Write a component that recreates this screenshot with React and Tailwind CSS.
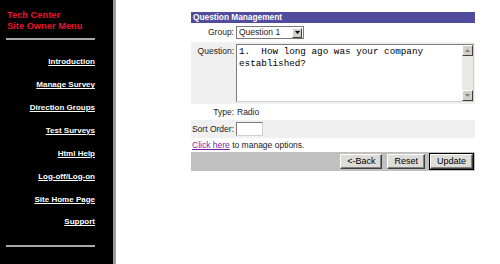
const links = [
  'Introduction',
  'Manage Survey',
  'Direction Groups',
  'Test Surveys',
  'Html Help',
  'Log-off/Log-on',
  'Site Home Page',
  'Support',
];

const Sidebar = () => (
  <div className="w-[116px] h-[264px] shrink-0 bg-black border-r-[3px] border-[#9c9c9c] pl-[6px] pt-[10px]">
    <div className="pl-[1px] text-[9.3px] leading-[11px] font-bold text-[#e8112d]">
      <div>Tech Center</div>
      <div>Site Owner Menu</div>
    </div>
    <div className="mt-[6px] w-[89px] h-[2px] bg-[#a8a8a8]" />
    <div className="mt-[11px] w-[89px] flex flex-col items-end">
      {links.map((l) => (
        <div key={l} className="h-[22.86px] flex items-center">
          <a href="#" className="text-[8px] font-bold text-white underline">
            {l}
          </a>
        </div>
      ))}
    </div>
    <div className="mt-[11px] w-[89px] h-[2px] bg-[#a8a8a8]" />
  </div>
);

const Btn = ({ children, def }) => (
  <div className={def ? 'border border-black' : 'border border-transparent'}>
    <div className="h-[15px] px-[6px] flex items-center bg-[#dedcd6] border-t border-l border-white border-r border-b border-r-[#404040] border-b-[#404040] text-[9px] text-black shadow-[inset_-1px_-1px_0_#808080]">
      {children}
    </div>
  </div>
);

const ArrowBtn = ({ up, color = '#808080', size = 11 }) => (
  <div
    className={
      (size === 11 ? 'h-[11px] w-[11px]' : 'h-[10px] w-[10px]') +
      ' shrink-0 bg-[#d4d0c8] border-t border-l border-white border-r border-b border-r-[#404040] border-b-[#404040] flex items-center justify-center'
    }
  >
    <svg width="5" height="3" viewBox="0 0 5 3">
      <path d={up ? 'M2.5 0 L5 3 L0 3 Z' : 'M0 0 L5 0 L2.5 3 Z'} fill={color} />
    </svg>
  </div>
);

export default function App() {
  return (
    <div className="flex w-[500px] h-[264px] bg-white overflow-hidden" style={{ fontFamily: '"Liberation Sans", Arial, sans-serif' }}>
      <Sidebar />
      <div className="flex-1 pl-[75px] pt-[12px]">
        <div className="w-[284px] text-[8.5px] text-[#222]">
          <div className="h-[11px] bg-[#514c9b] text-white font-bold text-[8.3px] leading-[11px] pl-[2px]">
            Question Management
          </div>

          <div className="h-[19px] flex items-center">
            <div className="w-[44px] text-right pr-[1px]">Group:</div>
            <div className="ml-[1px] h-[13px] w-[68px] border border-[#7a7a7a] bg-white flex items-center justify-between pl-[2px] pr-[1px]">
              <span className="text-[8.5px] leading-none whitespace-nowrap">Question 1</span>
              <ArrowBtn color="#000" size={10} />
            </div>
          </div>

          <div className="h-[62px] bg-[#f0f0f0] flex items-start pt-[2px]">
            <div className="w-[44px] text-right pr-[1px] pt-[1px]">Question:</div>
            <div className="ml-[1px] h-[58px] w-[238px] border border-t-[#7a7a7a] border-l-[#7a7a7a] border-r-[#d0d0d0] border-b-[#d0d0d0] bg-white flex">
              <div
                className="flex-1 pl-[2px] pt-[1px] text-[9.3px] leading-[11.5px] text-black whitespace-pre"
                style={{ fontFamily: '"Liberation Mono", "Courier New", monospace' }}
              >
                {'1.  How long ago was your company\nestablished?'}
              </div>
              <div className="w-[11px] h-full bg-[#e9e8e4] flex flex-col justify-between">
                <ArrowBtn up />
                <ArrowBtn />
              </div>
            </div>
          </div>

          <div className="h-[16px] flex items-center">
            <div className="w-[44px] text-right pr-[1px]">Type:</div>
            <div className="ml-[2px]">Radio</div>
          </div>

          <div className="h-[18px] bg-[#f0f0f0] flex items-center">
            <div className="w-[44px] text-right pr-[1px]">Sort Order:</div>
            <div className="ml-[1px] h-[14px] w-[27px] border border-t-[#7a7a7a] border-l-[#7a7a7a] border-r-[#d0d0d0] border-b-[#d0d0d0] bg-white" />
          </div>

          <div className="h-[14px] flex items-center pl-[1px]">
            <a href="#" className="text-[#7b1fa2] underline">Click here</a>
            <span>&nbsp;to manage options.</span>
          </div>

          <div className="h-[19px] bg-[#c0c0c0] flex items-center justify-end gap-[3px] pr-[1px]">
            <Btn>&lt;-Back</Btn>
            <Btn>Reset</Btn>
            <Btn def>Update</Btn>
          </div>
        </div>
      </div>
    </div>
  );
}
